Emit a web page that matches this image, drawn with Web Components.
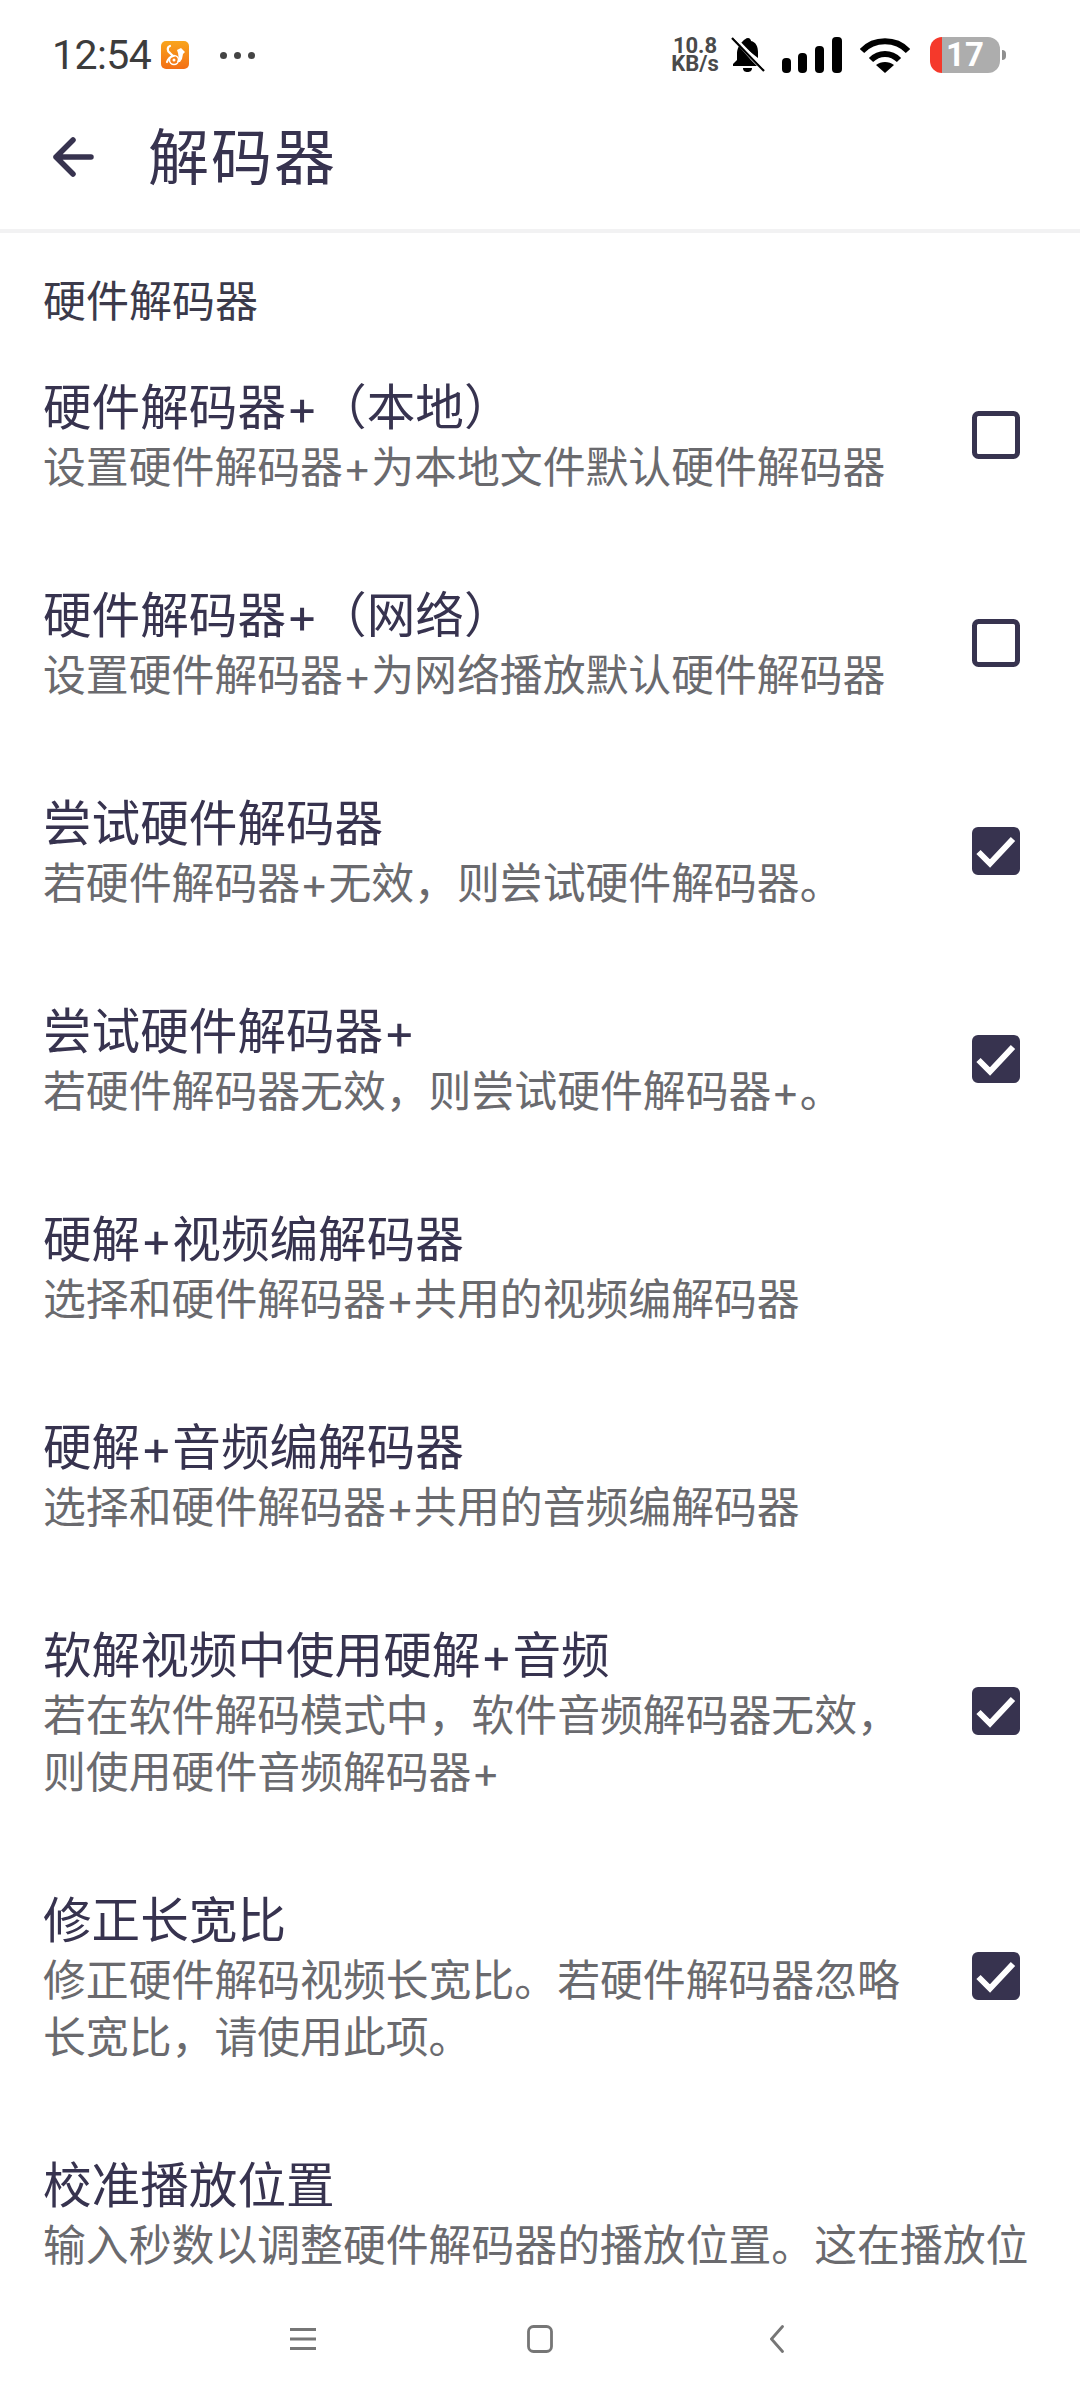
<!DOCTYPE html>
<html lang="zh">
<head>
<meta charset="utf-8">
<title>解码器</title>
<style>
  html, body { margin: 0; height: 100%; background: #fff; }
  body { font-family: "Noto Sans CJK SC", "Noto Sans", sans-serif; }
</style>
</head>
<body>
<app-screen>
  <status-bar slot="status"></status-bar>
  <app-bar slot="bar" heading="解码器"></app-bar>
  <pref-section heading="硬件解码器">
    <pref-row heading="硬件解码器+（本地）" check="off">设置硬件解码器+为本地文件默认硬件解码器</pref-row>
    <pref-row heading="硬件解码器+（网络）" check="off">设置硬件解码器+为网络播放默认硬件解码器</pref-row>
    <pref-row heading="尝试硬件解码器" check="on">若硬件解码器+无效，则尝试硬件解码器。</pref-row>
    <pref-row heading="尝试硬件解码器+" check="on">若硬件解码器无效，则尝试硬件解码器+。</pref-row>
    <pref-row heading="硬解+视频编解码器">选择和硬件解码器+共用的视频编解码器</pref-row>
    <pref-row heading="硬解+音频编解码器">选择和硬件解码器+共用的音频编解码器</pref-row>
    <pref-row heading="软解视频中使用硬解+音频" check="on">若在软件解码模式中，软件音频解码器无效，则使用硬件音频解码器+</pref-row>
    <pref-row heading="修正长宽比" check="on">修正硬件解码视频长宽比。若硬件解码器忽略长宽比，请使用此项。</pref-row>
    <pref-row heading="校准播放位置">输入秒数以调整硬件解码器的播放位置。这在播放位</pref-row>
  </pref-section>
  <nav-bar slot="nav"></nav-bar>
</app-screen>

<script>
class AppScreen extends HTMLElement {
  constructor() {
    super();
    this.attachShadow({ mode: 'open' }).innerHTML = `
      <style>
        :host { display: flex; flex-direction: column; width: 1080px; height: 2400px; overflow: hidden; background: #fff; }
        .scroll { flex: 1; min-height: 0; overflow: hidden; }
      </style>
      <slot name="status"></slot>
      <slot name="bar"></slot>
      <div class="scroll"><slot></slot></div>
      <slot name="nav"></slot>
    `;
  }
}

class StatusBar extends HTMLElement {
  constructor() {
    super();
    this.attachShadow({ mode: 'open' }).innerHTML = `
      <style>
        :host { display: flex; align-items: center; flex: none; height: 84px; padding: 26px 74px 0 52px; box-sizing: border-box; font-family: Roboto, "Noto Sans", sans-serif; }
        .time { width: 109px; font-size: 41px; line-height: 48px; letter-spacing: -0.6px; color: #3c3c3c; }
        .dots { display: flex; gap: 7px; margin-left: 31px; }
        .dots i { width: 7px; height: 7px; border-radius: 50%; background: #444; }
        .right { display: flex; align-items: center; margin-left: auto; }
        .speed { width: 50px; font-size: 22px; line-height: 18px; font-weight: 700; color: #4a4a4a; text-align: center; white-space: pre-line; }
        svg { display: block; flex: none; }
        .battery { width: 70px; height: 36px; margin-left: 20px; border-radius: 12px; background: linear-gradient(to right, #f5392b 12px, #adadad 12px); color: #fff; font-size: 33px; font-weight: 700; line-height: 36px; text-align: center; }
        .tip { width: 4px; height: 10px; margin-left: 2px; border-radius: 0 4px 4px 0; background: #8f8f8f; }
      </style>
      <div class="time">12:54</div>
      <svg width="28" height="28" viewBox="0 0 28 28">
        <defs><linearGradient id="uc" x1="0" y1="0" x2="0" y2="1"><stop offset="0" stop-color="#f9a51c"/><stop offset="1" stop-color="#f36f16"/></linearGradient></defs>
        <rect width="28" height="28" rx="5" fill="url(#uc)"/>
        <path d="M9 5c-3 1-3 5 0 7l3 3c-3 1-5 3-6 6" fill="none" stroke="#fff" stroke-width="2.200" stroke-linecap="round"/>
        <path d="M16 9l4-2 1 1 3 3-2 2-1 5-2 3h-3c2-3 2-7 0-12z" fill="#fff"/>
        <circle cx="13" cy="19" r="4.500" fill="none" stroke="#fff" stroke-width="1.500"/>
        <circle cx="13" cy="19" r="1.500" fill="#fff"/>
      </svg>
      <div class="dots"><i></i><i></i><i></i></div>
      <div class="right">
        <div class="speed">10.8
KB/s</div>
        <svg style="margin-left:11px" width="34" height="36" viewBox="0 0 34 36">
          <path d="M5 6l3 3c-1 2-2 4-2 7v7l-4 4v2h24l-6-6zM12 4c1-1 3-3 5-3 2 0 3 2 3 3 5 1 7 6 7 11v6L9 7c1-1 2-2 3-3zM12 31h9c0 3-2 4-4.500 4S12 34 12 31z" fill="#000"/>
          <path d="M1 1l32 33" stroke="#000" stroke-width="2.200" fill="none"/>
          <path d="M3.500 0l30 31" stroke="#fff" stroke-width="2" fill="none"/>
        </svg>
        <svg style="margin-left:17px" width="60" height="36" viewBox="0 0 60 36" fill="#000">
          <rect x="0" y="21" width="9" height="15" rx="4"/>
          <rect x="16" y="16" width="9" height="20" rx="4"/>
          <rect x="33" y="9" width="9" height="27" rx="4"/>
          <rect x="50" y="0" width="10" height="36" rx="4"/>
        </svg>
        <svg style="margin-left:18px" width="50" height="36" viewBox="0 0 50 36" fill="none" stroke="#000" stroke-width="6">
          <path d="M2 14C14 1 36 1 48 14"/>
          <path d="M11 23c8-8 20-8 28 0"/>
          <path d="M25 36l-9-8c5-4 13-4 18 0z" fill="#000" stroke="none"/>
        </svg>
        <div class="battery">17</div>
        <div class="tip"></div>
      </div>
    `;
  }
}

class AppBar extends HTMLElement {
  constructor() {
    super();
    this.attachShadow({ mode: 'open' }).innerHTML = `
      <style>
        :host { display: flex; align-items: center; flex: none; height: 149px; padding-left: 53px; box-sizing: border-box; border-bottom: 4px solid #f2f2f3; color: #37334f; }
        h1 { margin: 0 0 5px 54px; font-size: 61px; line-height: 80px; font-weight: 400; letter-spacing: 2px; }
        svg { display: block; flex: none; }
      </style>
      <svg width="41" height="40" viewBox="0 0 41 40" fill="none" stroke="#37334f" stroke-width="5.500" stroke-linecap="round" stroke-linejoin="round">
        <path d="M3 20h35M20 3L3 20l17 17"/>
      </svg>
      <h1>${this.getAttribute('heading')}</h1>
    `;
  }
}

class PrefSection extends HTMLElement {
  constructor() {
    super();
    this.attachShadow({ mode: 'open' }).innerHTML = `
      <style>
        :host { display: block; }
        h2 { margin: 0; padding: 36px 43px 0; height: 61px; font-size: 43px; line-height: 58px; font-weight: 400; color: #3b3a4a; }
      </style>
      <h2>${this.getAttribute('heading')}</h2>
      <slot></slot>
    `;
  }
}

class PrefRow extends HTMLElement {
  constructor() {
    super();
    const check = this.getAttribute('check');
    this.attachShadow({ mode: 'open' }).innerHTML = `
      <style>
        :host { display: flex; align-items: center; padding: 43.500px 60px 42.500px 43px; font-family: Inter, "Noto Sans CJK SC", sans-serif; }
        :host(:not([check])) { padding-right: 20px; }
        .text { flex: 1; min-width: 0; padding-top: 2px; }
        :host([check]) .text { padding-right: 44px; }
        .title { font-size: 48.600px; line-height: 63px; color: #37334f; }
        .sub { font-size: 42.850px; line-height: 57px; color: #6a6a6e; }
      </style>
      <div class="text">
        <div class="title">${this.getAttribute('heading')}</div>
        <div class="sub"><slot></slot></div>
      </div>
      ${check ? `<check-box ${check === 'on' ? 'checked' : ''}></check-box>` : ''}
    `;
  }
}

class CheckBox extends HTMLElement {
  constructor() {
    super();
    const mark = this.hasAttribute('checked')
      ? '<rect x="0" y="0" width="48" height="48" rx="6" fill="#37334f"/><path d="M6.500 25l11.500 11.500L41 12" fill="none" stroke="#fff" stroke-width="6"/>'
      : '<rect x="2.500" y="2.500" width="43" height="43" rx="4" fill="none" stroke="#37334f" stroke-width="5"/>';
    this.attachShadow({ mode: 'open' }).innerHTML = `
      <style>
        :host { display: block; flex: none; width: 48px; height: 48px; }
        svg { display: block; }
      </style>
      <svg width="48" height="48" viewBox="0 0 48 48">${mark}</svg>
    `;
  }
}

class NavBar extends HTMLElement {
  constructor() {
    super();
    this.attachShadow({ mode: 'open' }).innerHTML = `
      <style>
        :host { display: flex; flex: none; align-items: center; gap: 211px; height: 130px; padding: 7px 0 0 290px; box-sizing: border-box; background: #fff; }
        svg { display: block; flex: none; }
        .back { margin-left: 6px; }
      </style>
      <svg width="26" height="22" viewBox="0 0 26 22" stroke="#767676" stroke-width="3" fill="none">
        <path d="M0 1.500h26M0 11h26M0 20.500h26"/>
      </svg>
      <svg width="26" height="28" viewBox="0 0 26 28" stroke="#767676" stroke-width="2.800" fill="none">
        <rect x="1.500" y="1.500" width="23" height="25" rx="5"/>
      </svg>
      <svg class="back" width="14" height="28" viewBox="0 0 14 28" stroke="#767676" stroke-width="2.800" fill="none" stroke-linecap="round">
        <path d="M12.500 1.500L1.500 14l11 12.500"/>
      </svg>
    `;
  }
}

customElements.define('app-screen', AppScreen);
customElements.define('status-bar', StatusBar);
customElements.define('app-bar', AppBar);
customElements.define('pref-section', PrefSection);
customElements.define('pref-row', PrefRow);
customElements.define('check-box', CheckBox);
customElements.define('nav-bar', NavBar);
</script>
</body>
</html>
